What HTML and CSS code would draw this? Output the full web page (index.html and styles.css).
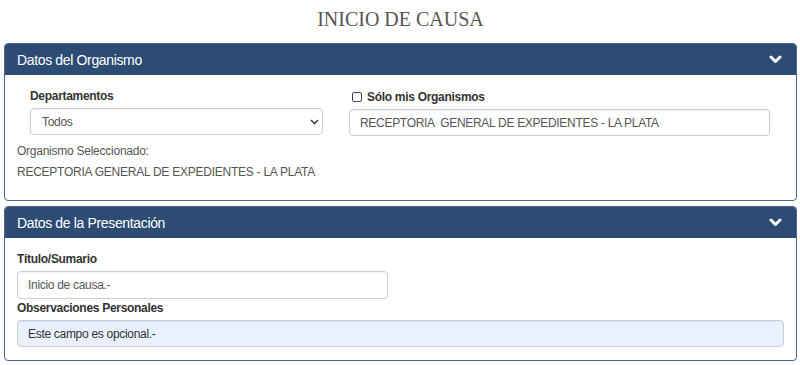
FILE: index.html
```html
<!DOCTYPE html>
<html lang="es">
<head>
    <meta charset="UTF-8">
    <meta name="viewport" content="width=device-width, initial-scale=1.0">
    <title>Inicio de Causa</title>
    <link rel="stylesheet" href="styles.css">
</head>
<body>
    <h1 class="page-title">INICIO DE CAUSA</h1>

    <!-- Datos del Organismo -->
    <section class="panel">
        <div class="panel-heading">
            <span>Datos del Organismo</span>
            <svg class="chevron" width="13" height="9" viewBox="0 0 13 9"><polyline points="2,2 6.5,6.5 11,2" fill="none" stroke="#fff" stroke-width="3" stroke-linecap="round" stroke-linejoin="round"/></svg>
        </div>
        <div class="panel-body">
            <div class="org-row">
                <div class="col-left">
                    <label class="field-label" for="depto">Departamentos</label>
                    <div class="select-wrap">
                        <select id="depto" class="form-control select">
                            <option>Todos</option>
                        </select>
                        <svg class="select-arrow" width="9" height="6" viewBox="0 0 9 6"><polyline points="1,1 4.5,4.5 8,1" fill="none" stroke="#444" stroke-width="1.6"/></svg>
                    </div>
                </div>
                <div class="col-right">
                    <label class="field-label check-label"><input type="checkbox" class="check"> Sólo mis Organismos</label>
                    <input type="text" class="form-control" value="RECEPTORIA  GENERAL DE EXPEDIENTES - LA PLATA">
                </div>
            </div>
            <p class="org-caption">Organismo Seleccionado:</p>
            <p class="org-name">RECEPTORIA GENERAL DE EXPEDIENTES - LA PLATA</p>
        </div>
    </section>

    <!-- Datos de la Presentacion -->
    <section class="panel">
        <div class="panel-heading">
            <span>Datos de la Presentación</span>
            <svg class="chevron" width="13" height="9" viewBox="0 0 13 9"><polyline points="2,2 6.5,6.5 11,2" fill="none" stroke="#fff" stroke-width="3" stroke-linecap="round" stroke-linejoin="round"/></svg>
        </div>
        <div class="panel-body body-pres">
            <label class="field-label" for="titulo">Título/Sumario</label>
            <input type="text" id="titulo" class="form-control titulo" value="Inicio de causa.-">
            <label class="field-label" for="obs">Observaciones Personales</label>
            <input type="text" id="obs" class="form-control obs" value="Este campo es opcional.-">
        </div>
    </section>
</body>
</html>
```

FILE: styles.css
```css
body {
    font-family: "Liberation Sans", Arial, sans-serif;
    margin: 0;
    padding: 0 3px 0 4px;
    background: #fff;
    color: #333;
}

.page-title {
    font-family: "Liberation Serif", "Times New Roman", serif;
    font-weight: normal;
    font-size: 20px;
    color: #555;
    text-align: center;
    margin: 0;
    height: 43px;
    line-height: 38px;
}

/* Panels */
.panel {
    border: 1px solid #4d6686;
    border-radius: 4px;
    margin-bottom: 5px;
    overflow: hidden;
}

.panel-heading {
    background: #2c4c74;
    color: #fff;
    height: 31px;
    padding: 0 14px 0 12px;
    font-size: 14px;
    letter-spacing: -0.35px;
    display: flex;
    align-items: center;
    justify-content: space-between;
}

.chevron {
    display: block;
}

.panel-body {
    padding: 12px 13px 19px 12px;
}

.body-pres {
    padding-bottom: 13px;
}

/* Organismo row */
.org-row {
    display: flex;
    align-items: flex-start;
}

.col-left {
    width: 293px;
    padding-left: 13px;
}

.col-right {
    flex: 1;
    margin-left: 26px;
    margin-right: 13px;
}

.field-label {
    display: block;
    font-size: 12px;
    letter-spacing: -0.3px;
    font-weight: bold;
    line-height: 18px;
    margin-bottom: 3px;
}

.check-label {
    display: flex;
    align-items: center;
    margin-top: 1px;
    margin-bottom: 3px;
}

.check {
    appearance: none;
    width: 10px;
    height: 10px;
    border: 1px solid #444;
    border-radius: 2px;
    margin: 0 5px 0 3px;
    background: #fff;
}

.form-control {
    display: block;
    box-sizing: border-box;
    width: 100%;
    height: 27px;
    border: 1px solid #ccc;
    border-radius: 4px;
    padding: 0 10px;
    font-family: "Liberation Sans", Arial, sans-serif;
    font-size: 12px;
    letter-spacing: -0.3px;
    color: #555;
    background: #fff;
    box-shadow: inset 0 1px 1px rgba(0, 0, 0, 0.05);
}

.select-wrap {
    position: relative;
}

.select {
    appearance: none;
    padding-left: 11px;
}

.select-arrow {
    position: absolute;
    right: 4px;
    top: 11px;
}

.org-caption,
.org-name {
    font-size: 12px;
    letter-spacing: -0.25px;
    line-height: 18px;
    color: #555;
    margin: 6px 0 0;
}

.org-name {
    margin-top: 3px;
}

/* Presentacion */
.titulo {
    width: 371px;
    height: 28px;
}

.obs {
    height: 27px;
    background: #e8f0fe;
    color: #333;
    margin-right: 2px;
    width: calc(100% + 1px);
}
```
